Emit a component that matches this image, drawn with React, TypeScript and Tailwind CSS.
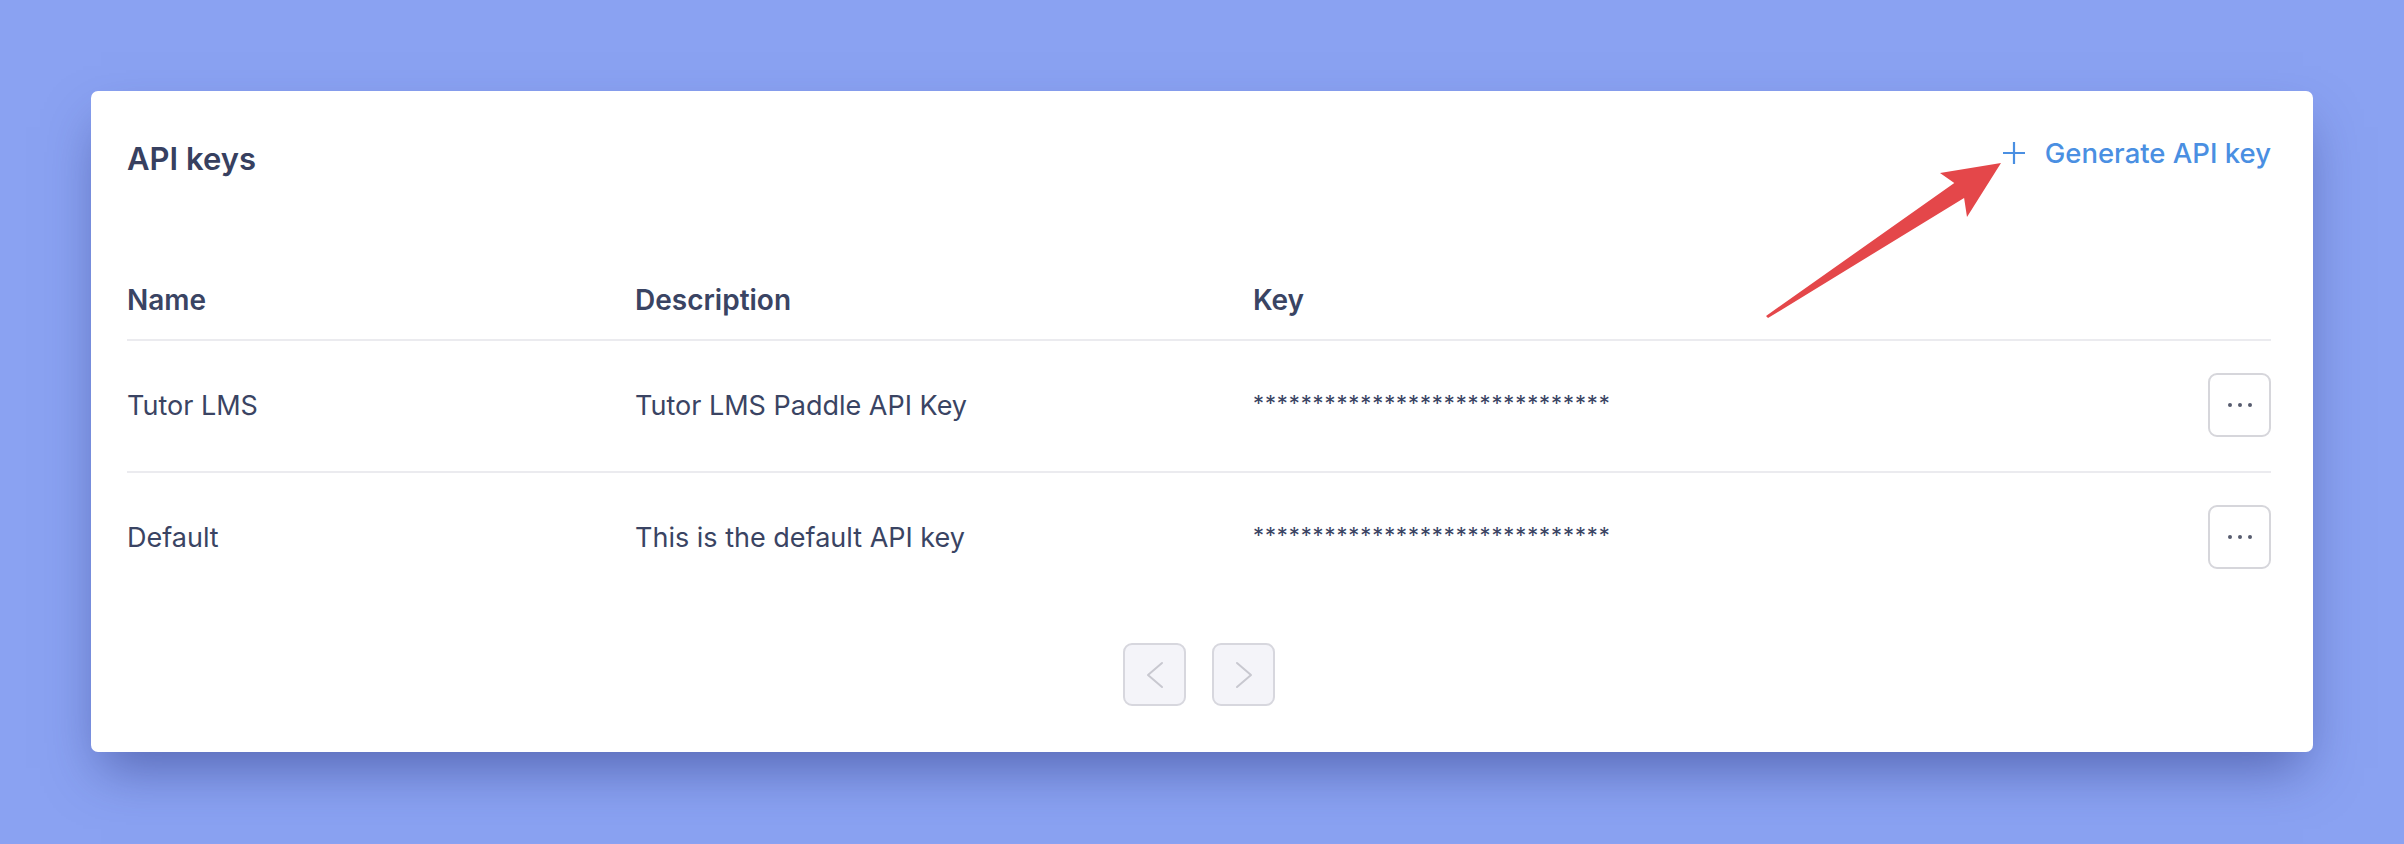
import React from 'react';

const apiKeys = [
  { id: 1, name: 'Tutor LMS', description: 'Tutor LMS Paddle API Key', key: '*'.repeat(30) },
  { id: 2, name: 'Default', description: 'This is the default API key', key: '*'.repeat(30) },
];

const MenuButton: React.FC = () => (
  <button className="w-[63px] h-[64px] rounded-[9px] border-2 border-[#d6d6db] bg-white flex items-center justify-center gap-[6px] -mt-[2px]">
    <span className="w-[4px] h-[4px] rounded-full bg-[#575c6e]" />
    <span className="w-[4px] h-[4px] rounded-full bg-[#575c6e]" />
    <span className="w-[4px] h-[4px] rounded-full bg-[#575c6e]" />
  </button>
);

const PageButton: React.FC<{ dir: 'left' | 'right' }> = ({ dir }) => (
  <button className="w-[63px] h-[63px] rounded-[9px] border-2 border-[#d7d7de] bg-[#f4f4f9] flex items-center justify-center">
    <svg width="18" height="28" viewBox="0 0 18 28" fill="none" stroke="#c8c8d0" strokeWidth="2" strokeLinecap="round" strokeLinejoin="round">
      {dir === 'left' ? <path d="M16 2 L2 14 L16 26" /> : <path d="M2 2 L16 14 L2 26" />}
    </svg>
  </button>
);

export default function App() {
  return (
    <div className="w-full h-[844px] bg-[#8aa2f2] pt-[91px] px-[91px] font-['Inter',sans-serif] text-[#3a4463]">
      <div className="relative bg-white rounded-[7px] pt-[46px] pl-[36px] pr-[42px] pb-[46px] shadow-[0_26px_50px_-10px_rgba(35,45,120,0.5)]">
        {/* Header */}
        <div className="flex items-start justify-between">
          <h1 className="mt-0.5 text-[31px] leading-[40px] font-semibold text-[#374060]">API keys</h1>
          <button className="flex items-center gap-[19px] text-[27.5px] leading-[32px] font-medium text-[#4a8fe2]">
            <svg width="24" height="24" viewBox="0 0 24 24" fill="none" stroke="#4a8fe2" strokeWidth="2.2">
              <path d="M12 1 V23 M1 12 H23" />
            </svg>
            Generate API key
          </button>
        </div>

        {/* Table */}
        <div className="mt-[105px]">
          <div className="grid grid-cols-[508px_618px_1fr_63px] items-center pb-[23px] border-b-2 border-[#ebebef] text-[28px] leading-[32px] font-semibold">
            <div>Name</div>
            <div>Description</div>
            <div>Key</div>
            <div />
          </div>
          {apiKeys.map((k, i) => (
            <div
              key={k.id}
              className={`grid grid-cols-[508px_618px_1fr_63px] items-center h-[130px] text-[27px] leading-[32px] ${
                i < apiKeys.length - 1 ? 'box-content border-b-2 border-[#ebebef]' : ''
              }`}
            >
              <div>{k.name}</div>
              <div>{k.description}</div>
              <div className="text-[22px] tracking-[0.9px] -mt-[6px]">{k.key}</div>
              <MenuButton />
            </div>
          ))}
        </div>

        {/* Pagination */}
        <div className="flex items-center justify-center gap-[26px] mt-[40px]">
          <PageButton dir="left" />
          <PageButton dir="right" />
        </div>

        {/* Annotation arrow */}
        <svg
          className="absolute left-[1660px] top-[60px] pointer-events-none"
          width="360"
          height="270"
          viewBox="1751 151 360 270"
        >
          <path
            d="M2001 163 L1940 173 L1954.3 183 L1766 316 L1768 318 L1964.1 198 L1967 217 Z"
            fill="#e4474a"
          />
        </svg>
      </div>
    </div>
  );
}
